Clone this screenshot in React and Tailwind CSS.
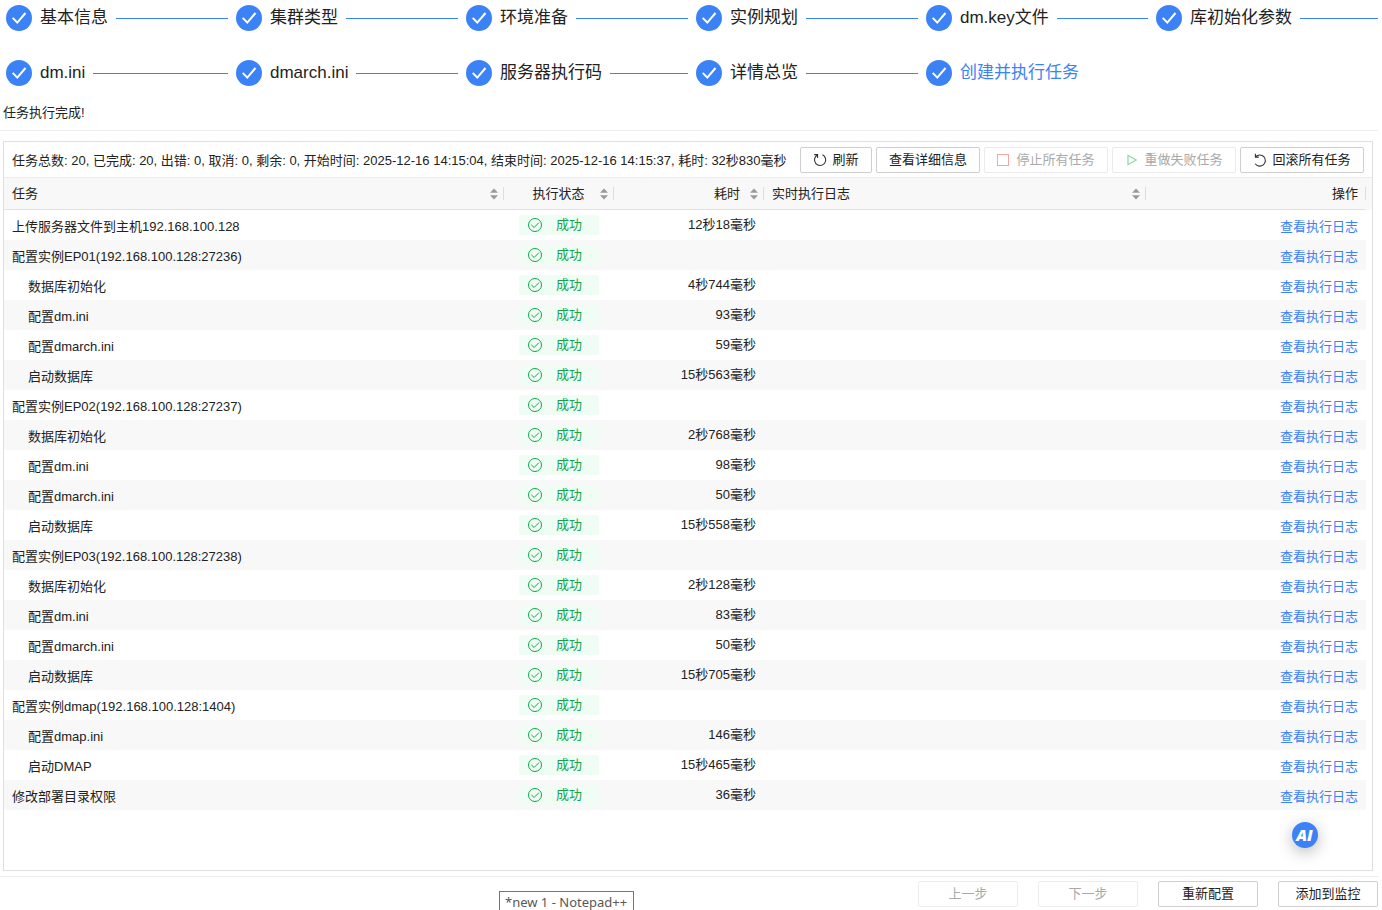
import clsx from 'clsx';

const steps = [
  '基本信息', '集群类型', '环境准备', '实例规划', 'dm.key文件', '库初始化参数',
  'dm.ini', 'dmarch.ini', '服务器执行码', '详情总览', '创建并执行任务',
];

const tasks = [
  { name: '上传服务器文件到主机192.168.100.128', time: '12秒18毫秒' },
  { name: '配置实例EP01(192.168.100.128:27236)' },
  { name: '数据库初始化', time: '4秒744毫秒', child: true },
  { name: '配置dm.ini', time: '93毫秒', child: true },
  { name: '配置dmarch.ini', time: '59毫秒', child: true },
  { name: '启动数据库', time: '15秒563毫秒', child: true },
  { name: '配置实例EP02(192.168.100.128:27237)' },
  { name: '数据库初始化', time: '2秒768毫秒', child: true },
  { name: '配置dm.ini', time: '98毫秒', child: true },
  { name: '配置dmarch.ini', time: '50毫秒', child: true },
  { name: '启动数据库', time: '15秒558毫秒', child: true },
  { name: '配置实例EP03(192.168.100.128:27238)' },
  { name: '数据库初始化', time: '2秒128毫秒', child: true },
  { name: '配置dm.ini', time: '83毫秒', child: true },
  { name: '配置dmarch.ini', time: '50毫秒', child: true },
  { name: '启动数据库', time: '15秒705毫秒', child: true },
  { name: '配置实例dmap(192.168.100.128:1404)' },
  { name: '配置dmap.ini', time: '146毫秒', child: true },
  { name: '启动DMAP', time: '15秒465毫秒', child: true },
  { name: '修改部署目录权限', time: '36毫秒' },
];

const columns = 'grid grid-cols-[500px_110px_150px_382px_220px] w-[1362px]';

function Step({ label, active, last }) {
  return (
    <div className="flex items-center h-[26px] w-[222px]">
      <svg className="w-[26px] h-[26px] shrink-0" viewBox="0 0 26 26">
        <circle cx="13" cy="13" r="13" fill="#3b82f6" />
        <path d="M6.7 12.9l4.6 4.7 8.2-9.6" fill="none" stroke="#fff" strokeWidth="2" />
      </svg>
      <span className={clsx('ml-2 text-[17px] leading-[26px] whitespace-nowrap', active ? 'text-[#3b82f6]' : 'text-[#222]')}>{label}</span>
      {!last && <div className="ml-2 mt-px flex-1 h-px bg-[#3b82f6]" />}
    </div>
  );
}

function Button({ children, disabled, className }) {
  return (
    <button
      disabled={disabled}
      className={clsx(
        'flex items-center justify-center h-[26px] border rounded-xs bg-white whitespace-nowrap leading-5',
        disabled ? 'border-[#ececec] text-[#a9a9a9]' : 'border-[#cfcfd1] text-[#222]',
        className
      )}
    >
      {children}
    </button>
  );
}

function ReloadIcon() {
  return (
    <svg className="w-[14px] h-[14px] mr-[5px]" viewBox="0 0 14 14" fill="none" stroke="#333" strokeWidth="1.1">
      <path d="M1.2 1.6H4.6V5M4.4 2A5.6 5.6 0 1 0 9.4 1.8" />
    </svg>
  );
}

function RollbackIcon() {
  return (
    <svg className="w-[14px] h-[14px] mr-[5px]" viewBox="0 0 14 14" fill="none" stroke="#333" strokeWidth="1.1">
      <path d="M2.4 0.8V4.1H5.8M2.6 3.8A5.6 5.6 0 1 1 2.2 10.8" />
    </svg>
  );
}

function Sorter() {
  return (
    <svg className="w-2 h-[12px] shrink-0" viewBox="0 0 8 12" fill="#999a9f">
      <path d="M4 0.5L8 4.8H0zM4 11.5L0 7.2H8z" />
    </svg>
  );
}

function HeadCell({ label, align, sortable }) {
  return (
    <div className="flex items-center h-[31px] pl-2">
      <span className={clsx('flex-1 leading-5 pt-px', align)}>{label}</span>
      {sortable && <Sorter />}
      <div className={clsx('w-px h-[13px] bg-[#dedede]', sortable ? 'ml-[5px]' : 'ml-[7px]')} />
    </div>
  );
}

function TaskRow({ task, striped }) {
  return (
    <div className={clsx(columns, 'h-[30px]', striped && 'bg-[#f8f8f8]')}>
      <div className={clsx('pt-[7px] leading-5', task.child ? 'pl-6' : 'pl-2')}>{task.name}</div>
      <div className="flex justify-center pt-[5px]">
        <div className="flex items-center w-20 h-5 pl-[9px] rounded-xs bg-[#f0fdf4] text-[#16a34a]">
          <svg className="w-[14px] h-[14px]" viewBox="0 0 14 14" fill="none" stroke="currentColor">
            <circle cx="7" cy="7" r="6.5" />
            <path d="M3.4 6.9l2.7 2.6 4.8-4.8" />
          </svg>
          <span className="ml-[14px] leading-5">成功</span>
        </div>
      </div>
      <div className="pt-[5px] pr-2 text-right leading-5">{task.time}</div>
      <div />
      <div className="pt-[7px] pr-2 text-right leading-5 text-[#3b82f6]">查看执行日志</div>
    </div>
  );
}

export default function App() {
  return (
    <div className="relative flex flex-col w-[1382px] h-[910px] overflow-hidden bg-white text-[13px] text-[#222] font-['Liberation_Sans','Noto_Sans_CJK_SC',sans-serif]">
      <div className="grid grid-cols-[repeat(6,222px)] gap-x-2 gap-y-[29px] pl-1.5 pt-[5px]">
        {steps.map((label, i) => (
          <Step key={label} label={label} active={i === steps.length - 1} last={i === steps.length - 1} />
        ))}
      </div>

      <div className="mt-[17px] ml-[3px] h-5 leading-5">任务执行完成!</div>
      <div className="mt-[7px] w-[1378px] h-px bg-[#ececec] shrink-0" />

      <div className="mt-[10px] ml-[3px] w-[1370px] h-[730px] shrink-0 border border-[#dedfe0]">
        {/* summary and actions */}
        <div className="flex h-[36px] pt-[5px] pl-2 pr-2 border-b border-[#ececec]">
          <span className="flex-1 leading-7 whitespace-nowrap">
            任务总数: 20, 已完成: 20, 出错: 0, 取消: 0, 剩余: 0, 开始时间: 2025-12-16 14:15:04, 结束时间: 2025-12-16 14:15:37, 耗时: 32秒830毫秒
          </span>
          <div className="flex gap-1">
            <Button className="w-[72px]"><ReloadIcon />刷新</Button>
            <Button className="w-[104px]">查看详细信息</Button>
            <Button className="w-[124px]" disabled>
              <span className="w-3 h-3 mr-[7px] border border-[#f8a5a5]" />停止所有任务
            </Button>
            <Button className="w-[124px] pl-0.5" disabled>
              <svg className="w-[10px] h-3 mr-[7px]" viewBox="0 0 10 12" fill="none" stroke="#95d9ae" strokeWidth="1.3">
                <path d="M1 1.3L9 6 1 10.7z" />
              </svg>
              重做失败任务
            </Button>
            <Button className="w-[124px]"><RollbackIcon />回滚所有任务</Button>
          </div>
        </div>

        <div className="h-8 bg-[#f8f8f8]">
          <div className={clsx(columns, 'h-8 border-b border-[#e2e2e2]')}>
            <HeadCell label="任务" sortable />
            <HeadCell label="执行状态" align="text-center pl-[5px]" sortable />
            <HeadCell label="耗时" align="text-right pr-[10px]" sortable />
            <HeadCell label="实时执行日志" sortable />
            <HeadCell label="操作" align="text-right" />
          </div>
        </div>

        {tasks.map((task, i) => <TaskRow key={i} task={task} striped={i % 2 === 1} />)}
      </div>

      <div className="mt-[5px] w-[1378px] h-px bg-[#ececec] shrink-0" />
      <div className="flex justify-end gap-5 mt-1 pr-1">
        <Button className="w-[100px]" disabled>上一步</Button>
        <Button className="w-[100px]" disabled>下一步</Button>
        <Button className="w-[100px]">重新配置</Button>
        <Button className="w-[100px]">添加到监控</Button>
      </div>

      {/* floating assistant */}
      <div className="absolute left-[1292px] top-[822px] flex items-center justify-center w-[26px] h-[26px] pr-px rounded-full bg-[#3b82f6] text-white text-[16px] leading-none font-extrabold italic font-['Open_Sans',sans-serif] shadow-[0_4px_16px_rgba(0,0,0,0.28)]">
        AI
      </div>
      <div className="absolute left-[499px] top-[891px] w-[135px] h-[22px] pl-[5px] border border-[#767676] bg-white text-[#575757] leading-5 whitespace-nowrap font-['Noto_Sans',sans-serif]">
        *new 1 - Notepad++
      </div>
    </div>
  );
}
